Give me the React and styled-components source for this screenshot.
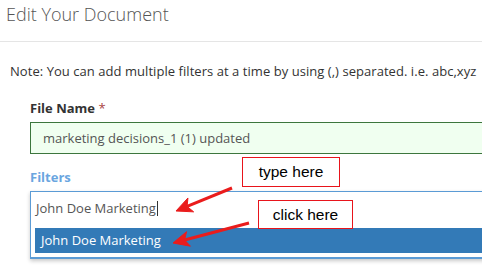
import React from "react";
import styled, { createGlobalStyle } from "styled-components";

const GlobalStyle = createGlobalStyle`
  html, body {
    margin: 0;
    padding: 0;
    background: #fff;
    overflow: hidden;
  }
  body {
    font-family: "Open Sans", "DejaVu Sans", sans-serif;
    color: #333;
  }
`;

const Page = styled.div`
  position: relative;
  width: 482px;
  height: 268px;
  overflow: hidden;
`;

const Header = styled.div`
  height: 42px;
  padding: 2px 6px 0;
  box-sizing: border-box;
  border-bottom: 1px solid #e5e5e5;
  h2 {
    margin: 0;
    font-size: 18px;
    line-height: 24px;
    font-weight: 300;
    color: #555;
  }
`;

const Body = styled.div`
  padding: 20px 0 0 10px;
`;

const Note = styled.p`
  margin: 0;
  font-size: 13px;
  letter-spacing: 0.05px;
  line-height: 18px;
  white-space: nowrap;
`;

const Group = styled.div`
  margin: ${(p) => p.$top}px 0 0 20px;
  width: 480px;
`;

const Label = styled.label`
  display: block;
  font-size: 13px;
  line-height: 18px;
  font-weight: 700;
  color: ${(p) => p.$color || "#333"};
  margin-bottom: 5px;
  span {
    color: #a94442;
    font-weight: 400;
  }
`;

const SuccessInput = styled.div`
  height: 32px;
  box-sizing: border-box;
  border: 1px solid #3c763d;
  background: #f0fff0;
  padding-left: 12px;
  font-size: 13px;
  line-height: 30px;
  color: #555;
`;

const Select = styled.div`
  border: 1px solid #5b9bd5;
  border-bottom-width: 2px;
  background: #fff;
  box-shadow: 0 2px 4px rgba(0, 0, 0, 0.22);
`;

const SearchRow = styled.div`
  height: 32px;
  padding-left: 5px;
  font-size: 13px;
  line-height: 32px;
  color: #555;
  display: flex;
  align-items: center;
`;

const Caret = styled.span`
  display: inline-block;
  width: 1px;
  height: 15px;
  margin-left: 1px;
  background: #333;
`;

const Options = styled.ul`
  list-style: none;
  margin: 0;
  padding: 4px 0 4px 4px;
`;

const Option = styled.li`
  height: 25px;
  padding-left: 6px;
  font-size: 13px;
  line-height: 25px;
  color: ${(p) => (p.$active ? "#fff" : "#333")};
  background: ${(p) => (p.$active ? "#337ab7" : "transparent")};
`;

const Callout = styled.div`
  position: absolute;
  left: ${(p) => p.$x}px;
  top: ${(p) => p.$y}px;
  width: ${(p) => p.$w}px;
  height: ${(p) => p.$h}px;
  box-sizing: border-box;
  border: 1px solid #e8141b;
  background: #fff;
  display: flex;
  align-items: center;
  justify-content: center;
  font-family: "Liberation Sans", Arial, sans-serif;
  font-size: 15.5px;
  color: #000;
`;

const Arrows = styled.svg`
  position: absolute;
  left: 0;
  top: 0;
  pointer-events: none;
`;

function Arrow({ x1, y1, x2, y2 }) {
  const dx = x2 - x1;
  const dy = y2 - y1;
  const len = Math.hypot(dx, dy);
  const ux = dx / len;
  const uy = dy / len;
  const bx = x2 - ux * 16;
  const by = y2 - uy * 16;
  const nx = -uy;
  const ny = ux;
  const pts = [
    [x2, y2],
    [bx + nx * 7.5, by + ny * 7.5],
    [x2 - ux * 12, y2 - uy * 12],
    [bx - nx * 7.5, by - ny * 7.5],
  ]
    .map((p) => p.join(","))
    .join(" ");
  return (
    <g fill="#ea1c1c" stroke="#ea1c1c">
      <line x1={x1} y1={y1} x2={x2 - ux * 12} y2={y2 - uy * 12} strokeWidth="3" />
      <polygon points={pts} strokeWidth="1" strokeLinejoin="round" />
    </g>
  );
}

export default function App() {
  return (
    <Page>
      <GlobalStyle />
      <Header>
        <h2>Edit Your Document</h2>
      </Header>
      <Body>
        <Note>
          Note: You can add multiple filters at a time by using (,) separated. i.e. abc,xyz
        </Note>
        <Group $top={19}>
          <Label>
            File Name <span>*</span>
          </Label>
          <SuccessInput>marketing decisions_1 (1) updated</SuccessInput>
        </Group>
        <Group $top={14}>
          <Label $color="#6aa6df">Filters</Label>
          <Select>
            <SearchRow>
              John Doe Marketing
              <Caret />
            </SearchRow>
            <Options>
              <Option $active>John Doe Marketing</Option>
            </Options>
          </Select>
        </Group>
      </Body>

      <Callout $x={242} $y={157} $w={98} $h={30}>
        type here
      </Callout>
      <Callout $x={258} $y={200} $w={95} $h={29}>
        click here
      </Callout>
      <Arrows width="482" height="268">
        <Arrow x1={232} y1={188} x2={176} y2={211} />
        <Arrow x1={249} y1={223} x2={173} y2={243} />
      </Arrows>
    </Page>
  );
}
